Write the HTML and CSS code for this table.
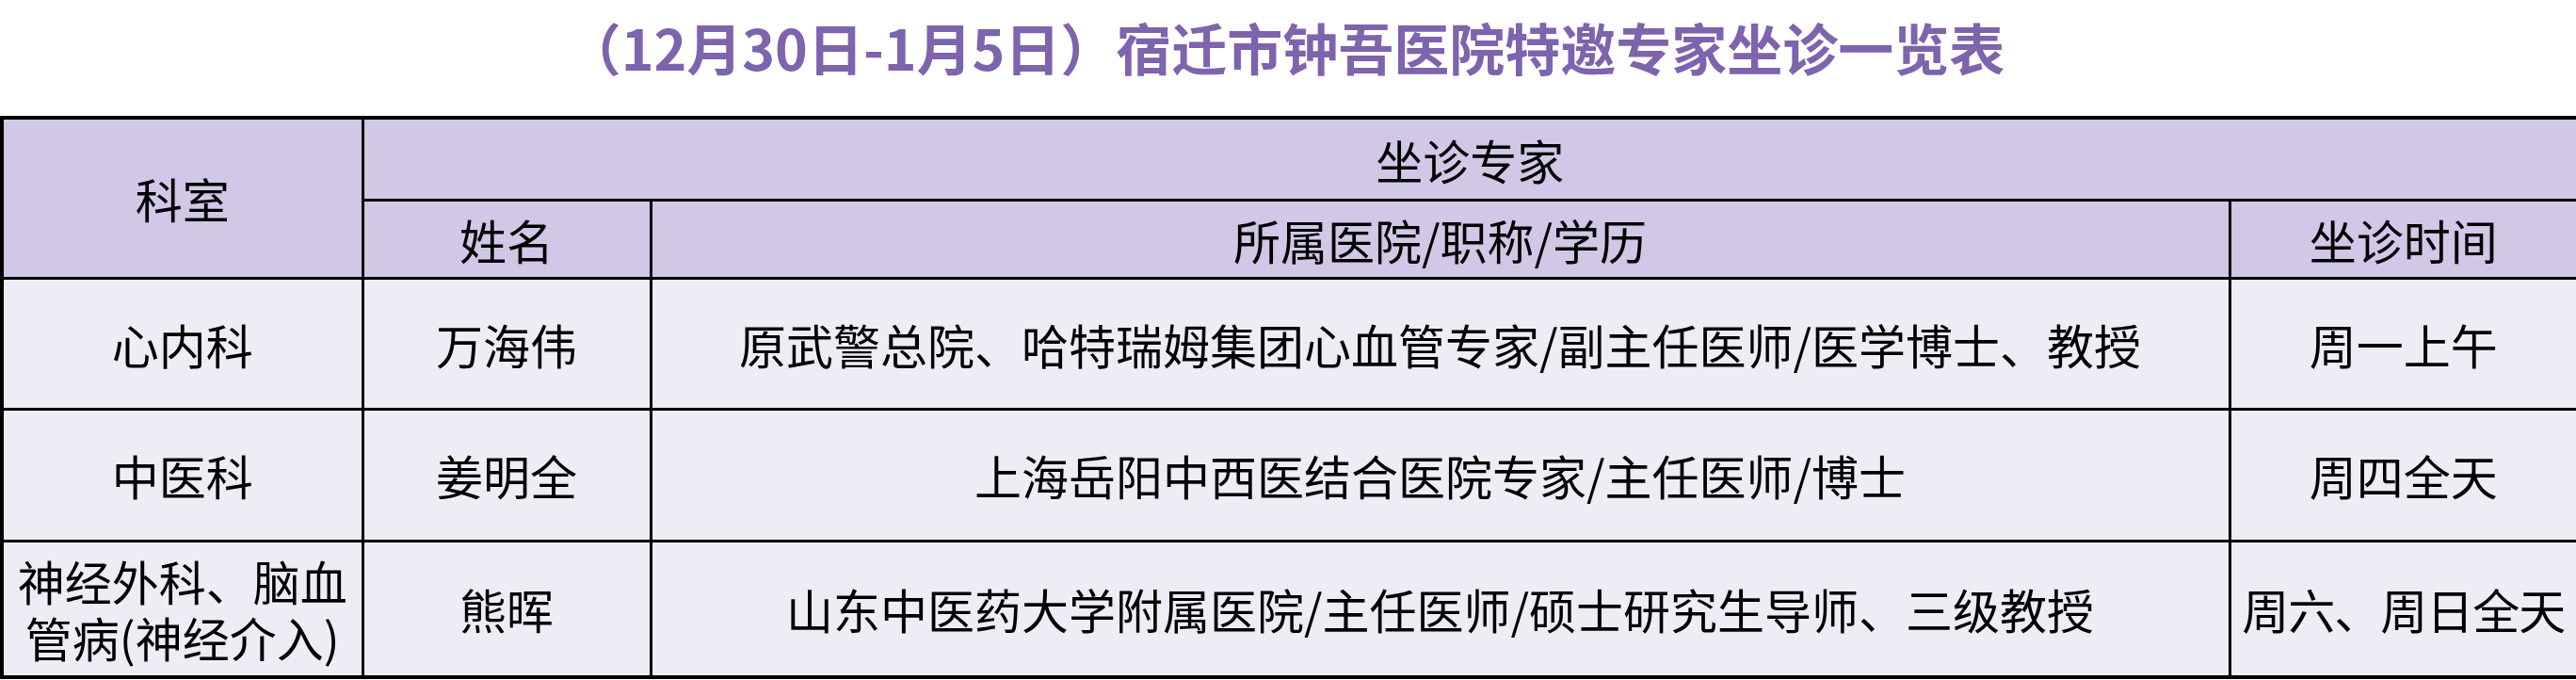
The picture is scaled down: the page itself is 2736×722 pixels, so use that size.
FILE: index.html
```html
<!DOCTYPE html>
<html lang="zh-CN">
<head>
<meta charset="utf-8">
<title>宿迁市钟吾医院特邀专家坐诊一览表</title>
<link rel="stylesheet" href="styles.css">
</head>
<body>
<div class="page">
  <h1 class="title">（12月30日-1月5日）宿迁市钟吾医院特邀专家坐诊一览表</h1>
  <table class="schedule">
    <colgroup>
      <col class="c-dept">
      <col class="c-name">
      <col class="c-hosp">
      <col class="c-time">
    </colgroup>
    <thead>
      <tr class="h1">
        <th rowspan="2">科室</th>
        <th colspan="3">坐诊专家</th>
      </tr>
      <tr class="h2">
        <th>姓名</th>
        <th>所属医院/职称/学历</th>
        <th>坐诊时间</th>
      </tr>
    </thead>
    <tbody>
      <tr class="r1">
        <td>心内科</td>
        <td>万海伟</td>
        <td>原武警总院、哈特瑞姆集团心血管专家/副主任医师/医学博士、教授</td>
        <td>周一上午</td>
      </tr>
      <tr class="r2">
        <td>中医科</td>
        <td>姜明全</td>
        <td>上海岳阳中西医结合医院专家/主任医师/博士</td>
        <td>周四全天</td>
      </tr>
      <tr class="r3">
        <td class="wrap">神经外科、脑血管病(神经介入)</td>
        <td>熊晖</td>
        <td>山东中医药大学附属医院/主任医师/硕士研究生导师、三级教授</td>
        <td class="nowrap">周六、周日全天</td>
      </tr>
    </tbody>
  </table>
</div>
</body>
</html>
```

FILE: styles.css
```css
html, body {
  margin: 0;
  padding: 0;
  background: #ffffff;
}

.page {
  width: 2736px;
  font-family: "Noto Sans CJK SC", "Noto Sans", sans-serif;
  color: #000000;
}

.title {
  box-sizing: border-box;
  height: 123px;
  margin: 0;
  padding: 20px 6px 0 0;
  text-align: center;
  font-size: 59px;
  line-height: 60px;
  font-weight: 700;
  color: #7e63ad;
  white-space: nowrap;
}

.schedule {
  width: 2736px;
  table-layout: fixed;
  border-collapse: collapse;
  border: 4px solid #000000;
}

.c-dept { width: 383px; }
.c-name { width: 306px; }
.c-hosp { width: 1677px; }
.c-time { width: 370px; }

.schedule th,
.schedule td {
  border: 3px solid #000000;
  padding: 0;
  text-align: center;
  vertical-align: middle;
  font-size: 50px;
  font-weight: 400;
  line-height: 60px;
  white-space: nowrap;
}

.schedule th {
  background: #d1c7e6;
}

.schedule td {
  background: #efecf6;
}

.schedule td.wrap {
  white-space: normal;
  padding: 0 8px;
}

.schedule td.nowrap {
  letter-spacing: -1px;
}

.h1 { height: 87px; }
.h2 { height: 83px; }
.r1 { height: 139px; }
.r2 { height: 140px; }
.r3 { height: 145px; }
```
